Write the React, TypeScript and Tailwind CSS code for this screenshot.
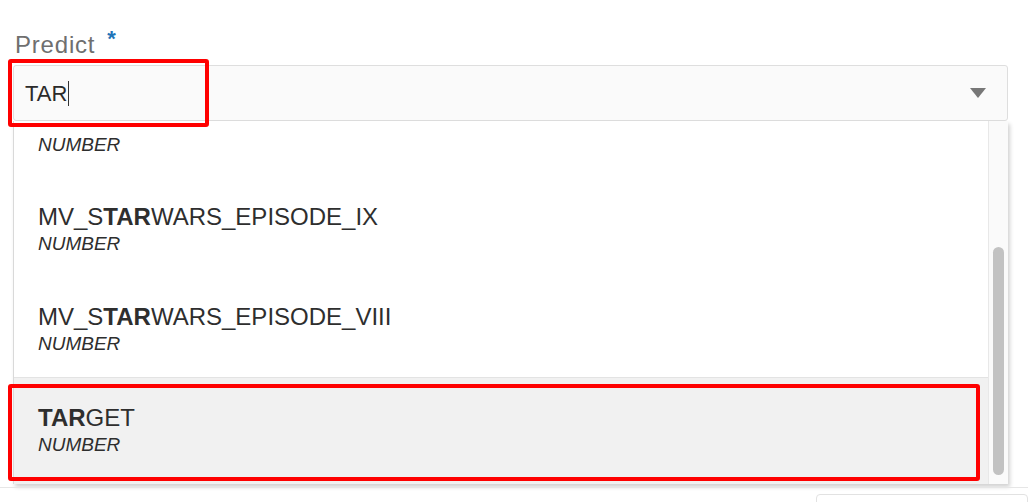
import React from "react";

const font = { fontFamily: '"Liberation Sans", Arial, sans-serif' };

function Item({ name, bold, rest, pre, className = "" }: { name?: boolean; bold?: string; rest?: string; pre?: string; className?: string }) {
  return (
    <div className={"flex flex-col pl-[24px] " + className}>
      {name !== false && (
        <div className="text-[24px] leading-[28px] text-[#2e2e2e] whitespace-nowrap">
          {pre}
          <span className="font-bold">{bold}</span>
          {rest}
        </div>
      )}
      <div className="text-[19px] leading-[26px] italic text-[#2e2e2e]">NUMBER</div>
    </div>
  );
}

export default function App() {
  return (
    <div className="relative w-[1031px] h-[502px] overflow-hidden bg-white" style={font}>
      <div className="pt-[31px] pl-[13px] w-[1008px]">
        <div className="flex items-start h-[28px] pl-[2px] mb-[6px]">
          <span className="text-[24px] leading-[28px] text-[#6f6f6f] tracking-[0.8px]">Predict</span>
          <span className="ml-[12px] -mt-[3px] text-[22px] leading-[22px] font-bold text-[#1f74b8]">*</span>
        </div>
        <div className="flex items-center h-[56px] bg-[#fafafa] border border-[#dedede] rounded-[3px] pl-[11px] pr-[21px]">
          <span className="text-[22px] text-[#2b2b2b]">TAR</span>
          <span className="ml-[1px] w-px h-[25px] bg-[#333]" />
          <div className="flex-1" />
          <svg width="16" height="10" viewBox="0 0 16 10">
            <path d="M0 0 H16 L8 10 Z" fill="#777" />
          </svg>
        </div>
        <div className="flex h-[363px] w-[995px] bg-white border-l border-[#d9d9d9] shadow-[2px_3px_4px_rgba(0,0,0,0.18)]">
          <div className="flex-1 overflow-hidden flex flex-col">
            <div className="h-[56px] pt-[11px] shrink-0">
              <Item name={false} />
            </div>
            <div className="h-[100px] pt-[26px] shrink-0">
              <Item pre="MV_S" bold="TAR" rest="WARS_EPISODE_IX" />
            </div>
            <div className="h-[100px] pt-[26px] shrink-0">
              <Item pre="MV_S" bold="TAR" rest="WARS_EPISODE_VIII" />
            </div>
            <div className="flex-1 border-t border-[#e3e3e3] bg-[#f1f1f1] pt-[26px]">
              <Item bold="TAR" rest="GET" />
            </div>
          </div>
          <div className="w-[20px] border-l border-[#e8e8e8] bg-[#fafafa] flex flex-col pt-[126px] pb-[9px] pl-[4px]">
            <div className="w-[11px] flex-1 rounded-full bg-[#c2c2c2]" />
          </div>
        </div>
        <div className="-ml-[13px] mt-[3px] h-px w-[1028px] bg-[#e6e6e6]" />
        <div className="flex justify-end w-[1015px] mt-[6px]">
          <div className="w-[212px] h-[20px] border border-[#e2e2e2] rounded-[4px] bg-white" />
        </div>
      </div>
      <div className="absolute left-[8px] top-[59px] w-[201px] h-[68px] border-[4px] border-[#ff0000] rounded-[3px]" />
      <div className="absolute left-[8px] top-[384px] w-[972px] h-[97px] border-[4px] border-[#ff0000] rounded-[3px]" />
    </div>
  );
}
